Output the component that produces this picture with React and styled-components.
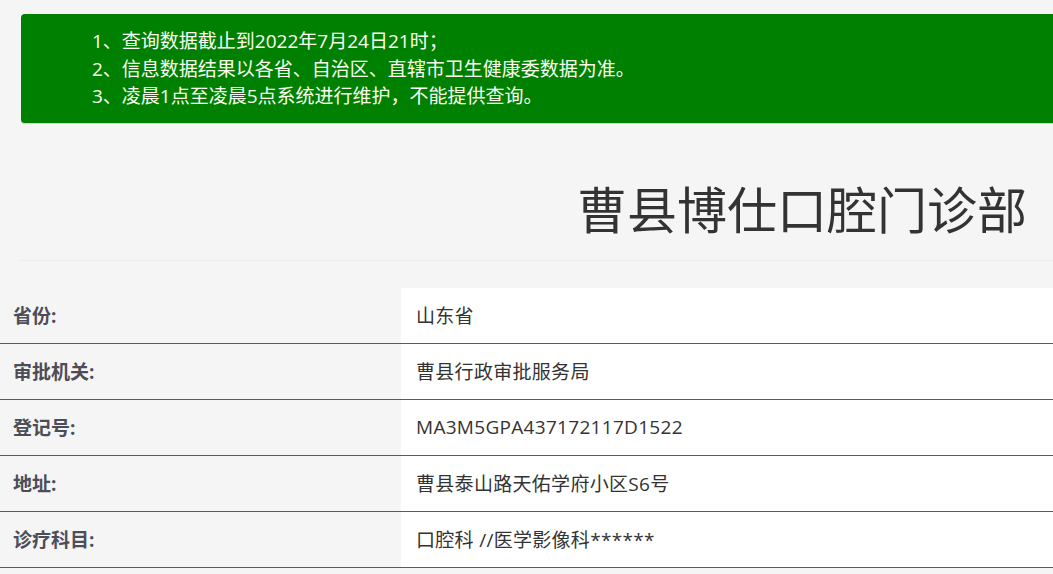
import React from "react";
import styled, { createGlobalStyle } from "styled-components";

const Global = createGlobalStyle`
  html, body {
    margin: 0;
    padding: 0;
    background: #f5f5f5;
    overflow: hidden;
  }
  body {
    font-family: "Open Sans", "Noto Sans CJK SC", "Noto Sans", sans-serif;
  }
`;

const Page = styled.div`
  width: 1053px;
  overflow: hidden;
  padding-top: 14px;
`;

const Notice = styled.div`
  margin: 0 -20px 0 21px;
  background: #008000;
  border-bottom: 1px solid #b8e8a8;
  border-radius: 4px;
  padding: 14px 0 12px 71px;
  color: #fbfff0;
  font-size: 19px;
  line-height: 27.5px;
`;

const NoticeLine = styled.div`
  white-space: nowrap;
`;

const Title = styled.h1`
  margin: 0;
  padding: 48px 26px 0 0;
  text-align: right;
  font-family: "Noto Sans CJK SC", sans-serif;
  font-size: 50px;
  font-weight: normal;
  line-height: 70px;
  color: #333;
  height: 88px;
`;

const Rule = styled.div`
  margin-left: 20px;
  border-top: 1px solid #ececec;
`;

const Table = styled.div`
  margin-top: 27px;
  display: grid;
  grid-template-columns: 401px 1fr;
`;

const Row = styled.div`
  display: contents;
`;

const Label = styled.div`
  height: 55px;
  display: flex;
  align-items: center;
  padding-left: 13px;
  font-weight: bold;
  font-size: 19px;
  color: #4d4d58;
  border-bottom: 1px solid #2a7552;
  background: #f5f5f5;
`;

const Value = styled.div`
  height: 55px;
  display: flex;
  align-items: center;
  padding-left: 15px;
  font-size: 19px;
  letter-spacing: 0.3px;
  color: #333;
  border-bottom: 1px solid #2a7552;
  background: #fff;
  white-space: nowrap;
`;

const rows = [
  ["省份:", "山东省"],
  ["审批机关:", "曹县行政审批服务局"],
  ["登记号:", "MA3M5GPA437172117D1522"],
  ["地址:", "曹县泰山路天佑学府小区S6号"],
  ["诊疗科目:", "口腔科 //医学影像科******"],
];

export default function App() {
  return (
    <Page>
      <Global />
      <Notice>
        <NoticeLine>1、查询数据截止到2022年7月24日21时；</NoticeLine>
        <NoticeLine>2、信息数据结果以各省、自治区、直辖市卫生健康委数据为准。</NoticeLine>
        <NoticeLine>3、凌晨1点至凌晨5点系统进行维护，不能提供查询。</NoticeLine>
      </Notice>
      <Title>曹县博仕口腔门诊部</Title>
      <Rule />
      <Table>
        {rows.map(([k, v]) => (
          <Row key={k}>
            <Label>{k}</Label>
            <Value>{v}</Value>
          </Row>
        ))}
      </Table>
    </Page>
  );
}
